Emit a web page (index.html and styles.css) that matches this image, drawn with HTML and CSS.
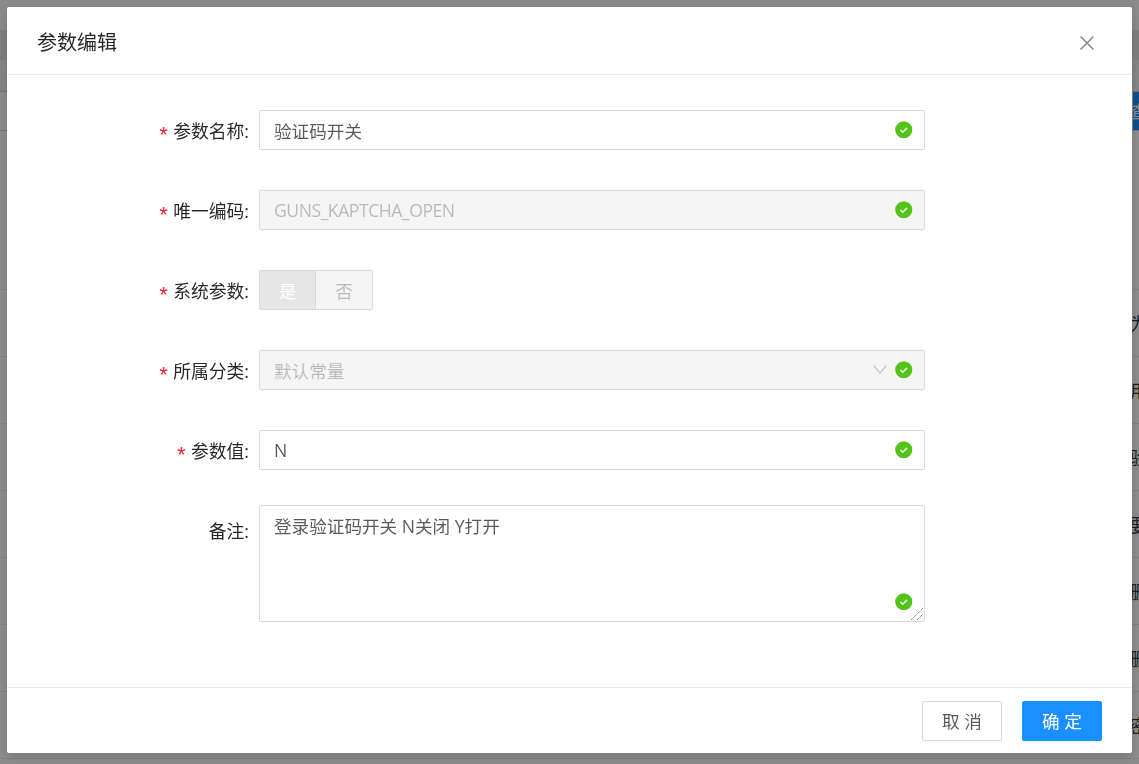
FILE: index.html
```html
<!DOCTYPE html>
<html lang="zh-CN">
<head>
<meta charset="utf-8">
<title>参数编辑</title>
<link rel="stylesheet" href="styles.css">
</head>
<body>
<main class="page">
  <div class="page-top"></div>
  <div class="table-head"></div>
  <div class="row r-toolbar"><span class="action-btn">查</span></div>
  <div class="row r-first"></div>
  <div class="row"><span class="cell">为</span></div>
  <div class="row"><span class="cell">用</span></div>
  <div class="row"><span class="cell">验</span></div>
  <div class="row"><span class="cell">要</span></div>
  <div class="row"><span class="cell">删</span></div>
  <div class="row"><span class="cell">删</span></div>
  <div class="row"><span class="cell">密</span></div>
</main>

<div class="mask">
  <section class="modal">
    <header class="modal-header">
      <h2 class="modal-title">参数编辑</h2>
      <svg class="close" width="16" height="16" viewBox="0 0 16 16"><path d="M1.5 1.5l13 13M14.5 1.5l-13 13" fill="none" stroke="#8c8c8c" stroke-width="1.6"/></svg>
    </header>
    <form class="modal-body">
      <div class="item">
        <label class="label"><span class="star">*</span>参数名称:</label>
        <div class="control">
          <input class="input" value="验证码开关">
          <svg class="ok" viewBox="0 0 18 18"><circle cx="9" cy="9" r="8.8" fill="#52c41a"/><path d="M5.6 9.2l2.4 2.3 4.4-4.6" fill="none" stroke="#fff" stroke-width="1.4"/></svg>
        </div>
      </div>
      <div class="item">
        <label class="label"><span class="star">*</span>唯一编码:</label>
        <div class="control">
          <input class="input input-code" disabled value="GUNS_KAPTCHA_OPEN">
          <svg class="ok" viewBox="0 0 18 18"><circle cx="9" cy="9" r="8.8" fill="#52c41a"/><path d="M5.6 9.2l2.4 2.3 4.4-4.6" fill="none" stroke="#fff" stroke-width="1.4"/></svg>
        </div>
      </div>
      <div class="item">
        <label class="label"><span class="star">*</span>系统参数:</label>
        <div class="radio-group">
          <span class="radio radio-on">是</span>
          <span class="radio">否</span>
        </div>
      </div>
      <div class="item">
        <label class="label"><span class="star">*</span>所属分类:</label>
        <div class="control">
          <div class="select">默认常量</div>
          <svg class="chevron" width="14" height="9" viewBox="0 0 14 9"><path d="M.6.6L7 8l6.4-7.4" fill="none" stroke="#c4c4c4" stroke-width="1.2"/></svg>
          <svg class="ok" viewBox="0 0 18 18"><circle cx="9" cy="9" r="8.8" fill="#52c41a"/><path d="M5.6 9.2l2.4 2.3 4.4-4.6" fill="none" stroke="#fff" stroke-width="1.4"/></svg>
        </div>
      </div>
      <div class="item">
        <label class="label"><span class="star">*</span>参数值:</label>
        <div class="control">
          <input class="input" value="N">
          <svg class="ok" viewBox="0 0 18 18"><circle cx="9" cy="9" r="8.8" fill="#52c41a"/><path d="M5.6 9.2l2.4 2.3 4.4-4.6" fill="none" stroke="#fff" stroke-width="1.4"/></svg>
        </div>
      </div>
      <div class="item">
        <label class="label">备注:</label>
        <div class="control">
          <textarea class="textarea">登录验证码开关 N关闭 Y打开</textarea>
          <svg class="ok ok-area" viewBox="0 0 18 18"><circle cx="9" cy="9" r="8.8" fill="#52c41a"/><path d="M5.6 9.2l2.4 2.3 4.4-4.6" fill="none" stroke="#fff" stroke-width="1.4"/></svg>
          <svg class="grip" width="12" height="12" viewBox="0 0 12 12"><path d="M0 12L12 0M6 12l6-6" fill="none" stroke="#555" stroke-width="1" stroke-dasharray="1 1"/></svg>
        </div>
      </div>
    </form>
    <footer class="modal-footer">
      <button type="button" class="btn">取 消</button>
      <button type="button" class="btn btn-primary">确 定</button>
    </footer>
  </section>
</div>
</body>
</html>
```
FILE: styles.css
```css
* { box-sizing: border-box; }
html, body { margin: 0; height: 100%; overflow: hidden; }
body {
  font-family: "Open Sans", "Noto Sans CJK SC", sans-serif;
  font-size: 17.6px;
  background: #fff;
  color: rgba(0, 0, 0, .65);
}
.page { display: flex; flex-direction: column; height: 764px; overflow: hidden; }
.page-top { height: 30px; background: #fbfbfb; flex: none; }
.table-head { height: 62px; flex: none; background: linear-gradient(#e6e6e6 0, #e6e6e6 30px, #f2f2f2 30px); border-bottom: 1px solid #d0d0d0; }
.row { height: 67px; flex: none; border-bottom: 1px solid #e8e8e8; position: relative; white-space: nowrap; overflow: hidden; }
.r-toolbar { height: 39px; border-bottom: 1px solid #d0d0d0; }
.r-first { height: 159px; }
.cell { position: absolute; left: 1130px; top: 20px; font-size: 18px; color: rgba(0, 0, 0, .8); }
.action-btn { position: absolute; left: 1133px; top: 0; width: 60px; height: 39px; background: #1c8fff; color: #fff; line-height: 39px; text-indent: -3px; }
.mask {
  position: fixed; inset: 0; padding: 7px;
  background: rgba(0, 0, 0, .45);
}
.modal {
  display: flex; flex-direction: column;
  width: 1125px; height: 746px;
  background: #fff; border-radius: 2px;
  box-shadow: 0 4px 12px rgba(0, 0, 0, .15);
}
.modal-header {
  display: flex; align-items: center; justify-content: space-between;
  height: 68px; padding: 3px 37px 0 30px;
  border-bottom: 1px solid #e8e8e8;
}
.modal-title { margin: 2px 0 0; font-size: 20px; font-weight: 400; line-height: 28px; color: rgba(0, 0, 0, .85); }
.close { display: block; margin-top: 2px; }
.modal-body { flex: 1; padding: 35px 0 0; }
.item { display: flex; margin-bottom: 40px; }
.label {
  width: 252px; height: 40px; padding: 1px 10px 0 0; flex: none;
  text-align: right; line-height: 40px; font-size: 17.8px; overflow: hidden;
  color: rgba(0, 0, 0, .85);
}
.star { display: inline-block; height: 20px; line-height: 20px; color: #f5222d; margin-right: 3px; font-family: "Liberation Mono", monospace; font-size: 22px; vertical-align: -5px; }
.control { position: relative; width: 666px; }
.input, .select, .textarea {
  display: block; width: 100%; height: 40px; margin: 0;
  padding: 0 14px;
  border: 1px solid #d9d9d9; border-radius: 2px;
  font: inherit; color: rgba(0, 0, 0, .65);
  background: #fff; outline: 0;
}
.input:disabled, .select { background: #f5f5f5; color: rgba(0, 0, 0, .25); -webkit-text-fill-color: rgba(0, 0, 0, .25); opacity: 1; }
.input-code { letter-spacing: -.47px; }
.select { line-height: 40px; }
.textarea { height: 117px; margin-top: -5px; padding: 7px 14px; line-height: 1.5; resize: none; }
.ok { position: absolute; right: 12.5px; top: 11px; width: 17.5px; height: 17.5px; }
.ok-area { top: auto; bottom: 12px; }
.grip { position: absolute; right: 2px; bottom: 2px; }
.chevron { position: absolute; right: 38px; top: 15px; }
.radio-group { display: flex; height: 40px; }
.radio {
  width: 57px; height: 40px; line-height: 40px; text-align: center;
  border: 1px solid #d9d9d9; background: #f5f5f5; color: rgba(0, 0, 0, .25);
}
.radio + .radio { margin-left: -1px; width: 58px; border-radius: 0 2px 2px 0; }
.radio-on { background: #e6e6e6; color: #fff; border-radius: 2px 0 0 2px; }
.modal-footer {
  display: flex; justify-content: flex-end; align-items: center; gap: 20px;
  height: 66px; padding: 0 30px;
  border-top: 1px solid #e8e8e8;
}
.btn {
  width: 80px; height: 40px; padding: 0;
  border: 1px solid #d9d9d9; border-radius: 2px;
  background: #fff; color: rgba(0, 0, 0, .65);
  font: inherit; white-space: pre;
  box-shadow: 0 2px 0 rgba(0, 0, 0, .015);
}
.btn-primary { background: #1890ff; border-color: #1890ff; color: #fff; box-shadow: 0 2px 0 rgba(0, 0, 0, .045); }
```
